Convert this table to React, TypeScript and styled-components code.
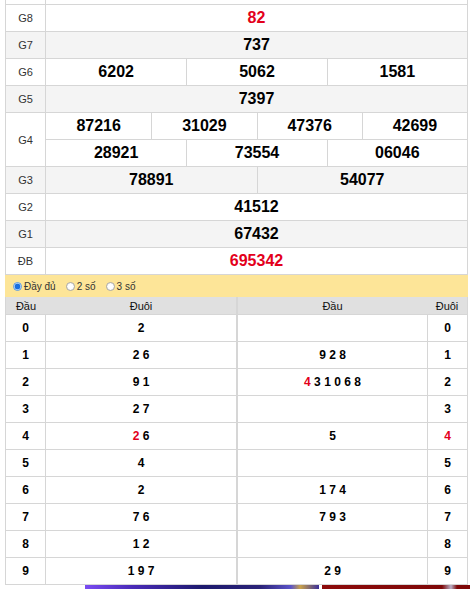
import React from 'react';
import styled, { createGlobalStyle } from 'styled-components';

const BORDER = '#d6d6d6';

const GlobalStyle = createGlobalStyle`
  html, body { margin: 0; padding: 0; overflow: hidden; background: #fff; }
  body { font-family: "Liberation Sans", Arial, sans-serif; }
`;

const Page = styled.div`
  width: 463px;
  margin-left: 5px;
`;

const Results = styled.div`
  border-left: 1px solid ${BORDER};
  border-right: 1px solid ${BORDER};
`;

const Row = styled.div<{ $h: number; $alt?: boolean }>`
  display: flex;
  height: ${p => p.$h}px;
  box-sizing: border-box;
  border-bottom: 1px solid ${BORDER};
  background: ${p => (p.$alt ? '#f4f4f4' : '#fff')};
`;

const Label = styled.div`
  width: 40px;
  flex: none;
  box-sizing: border-box;
  border-right: 1px solid ${BORDER};
  display: flex;
  align-items: center;
  justify-content: center;
  font-size: 11px;
  color: #333;
`;

const Values = styled.div`
  flex: 1;
  min-width: 0;
  display: flex;
  flex-direction: column;
`;

const Line = styled.div<{ $n: number }>`
  flex: 1;
  display: grid;
  grid-template-columns: repeat(${p => p.$n}, 1fr);
  & + & {
    border-top: 1px solid ${BORDER};
  }
`;

const Prize = styled.div<{ $red?: boolean }>`
  display: flex;
  align-items: center;
  justify-content: center;
  font-size: 16px;
  font-weight: bold;
  color: ${p => (p.$red ? '#e3001b' : '#000')};
  & + & {
    border-left: 1px solid ${BORDER};
  }
`;

const Options = styled.div`
  height: 22px;
  background: #fde598;
  display: flex;
  align-items: center;
  padding-left: 8px;
  gap: 10px;
  font-size: 10px;
  color: #333;
`;

const Option = styled.label`
  display: inline-flex;
  align-items: center;
  gap: 2px;
`;

const Radio = styled.input.attrs({ type: 'radio' })`
  appearance: none;
  -webkit-appearance: none;
  margin: 0;
  width: 9px;
  height: 9px;
  box-sizing: border-box;
  border-radius: 50%;
  border: 1px solid #a9a9a9;
  background: radial-gradient(circle, #ffffff 0 40%, #ececec 100%);
  &:checked {
    border-color: #5b9be6;
    background: radial-gradient(circle, #1a6fe0 0 2.6px, #cfe3fb 3.2px);
  }
`;

const LotoWrap = styled.div`
  display: flex;
`;

const LotoTable = styled.div<{ $w: number }>`
  width: ${p => p.$w}px;
  box-sizing: border-box;
  border-left: 1px solid ${BORDER};
  border-right: 1px solid ${BORDER};
`;

const LotoHead = styled.div<{ $cols: string }>`
  display: grid;
  grid-template-columns: ${p => p.$cols};
  height: 18px;
  box-sizing: border-box;
  background: #e0e0e0;
  border-bottom: 1px solid ${BORDER};
  align-items: center;
  text-align: center;
  font-size: 11px;
  color: #111;
`;

const LotoRow = styled.div<{ $cols: string }>`
  display: grid;
  grid-template-columns: ${p => p.$cols};
  height: 27px;
  box-sizing: border-box;
  border-bottom: 1px solid ${BORDER};
`;

const LotoCell = styled.div<{ $divider?: 'left' | 'right' }>`
  display: flex;
  align-items: center;
  justify-content: center;
  font-size: 12px;
  font-weight: bold;
  color: #000;
  ${p => (p.$divider === 'left' ? `border-left: 1px solid ${BORDER};` : '')}
  ${p => (p.$divider === 'right' ? `border-right: 1px solid ${BORDER};` : '')}
`;

const DigitList = styled.span`
  white-space: pre;
`;

const Digit = styled.span<{ $red?: boolean }>`
  color: ${p => (p.$red ? '#e3001b' : 'inherit')};
`;

const AdStrip = styled.div`
  display: flex;
  gap: 3px;
  margin-left: 80px;
`;

const Banner = styled.div<{ $w: number; $kind: 'purple' | 'red' }>`
  width: ${p => p.$w}px;
  height: 4px;
  flex: none;
  background: ${p =>
    p.$kind === 'purple'
      ? 'linear-gradient(90deg, #7a4cf2 0%, #4a2bb8 20%, #1d1a6e 50%, #2b2378 75%, #5b54c8 88%, #c9a24a 92%, #3a2f9a 100%)'
      : 'linear-gradient(90deg, #8c0b0b 0%, #7e0808 80%, #b9b1c9 86%, #7e0808 90%)'};
`;

type PrizeRow = { label: string; lines: string[][]; red?: boolean };

const prizes: PrizeRow[] = [
  { label: 'G8', lines: [['82']], red: true },
  { label: 'G7', lines: [['737']] },
  { label: 'G6', lines: [['6202', '5062', '1581']] },
  { label: 'G5', lines: [['7397']] },
  { label: 'G4', lines: [['87216', '31029', '47376', '42699'], ['28921', '73554', '06046']] },
  { label: 'G3', lines: [['78891', '54077']] },
  { label: 'G2', lines: [['41512']] },
  { label: 'G1', lines: [['67432']] },
  { label: 'ĐB', lines: [['695342']], red: true },
];

type D = { v: string; red?: boolean };

const leftLoto: D[][] = [
  [{ v: '2' }],
  [{ v: '2' }, { v: '6' }],
  [{ v: '9' }, { v: '1' }],
  [{ v: '2' }, { v: '7' }],
  [{ v: '2', red: true }, { v: '6' }],
  [{ v: '4' }],
  [{ v: '2' }],
  [{ v: '7' }, { v: '6' }],
  [{ v: '1' }, { v: '2' }],
  [{ v: '1' }, { v: '9' }, { v: '7' }],
];

const rightLoto: D[][] = [
  [],
  [{ v: '9' }, { v: '2' }, { v: '8' }],
  [{ v: '4', red: true }, { v: '3' }, { v: '1' }, { v: '0' }, { v: '6' }, { v: '8' }],
  [],
  [{ v: '5' }],
  [],
  [{ v: '1' }, { v: '7' }, { v: '4' }],
  [{ v: '7' }, { v: '9' }, { v: '3' }],
  [],
  [{ v: '2' }, { v: '9' }],
];

const Digits = ({ list }: { list: D[] }) => (
  <DigitList>
    {list.map((d, i) => (
      <React.Fragment key={i}>
        {i > 0 ? ' ' : ''}
        <Digit $red={d.red}>{d.v}</Digit>
      </React.Fragment>
    ))}
  </DigitList>
);

export default function App() {
  return (
    <>
      <GlobalStyle />
      <Page>
        <Results>
          <Row $h={5}>
            <Label />
            <Values />
          </Row>
          {prizes.map((p, i) => (
            <Row key={p.label} $h={27 * p.lines.length} $alt={i % 2 === 1}>
              <Label>{p.label}</Label>
              <Values>
                {p.lines.map((line, li) => (
                  <Line key={li} $n={line.length}>
                    {line.map(n => (
                      <Prize key={n} $red={p.red}>
                        {n}
                      </Prize>
                    ))}
                  </Line>
                ))}
              </Values>
            </Row>
          ))}
        </Results>
        <Options>
          <Option>
            <Radio name="mode" defaultChecked />
            Đầy đủ
          </Option>
          <Option>
            <Radio name="mode" />2 số
          </Option>
          <Option>
            <Radio name="mode" />3 số
          </Option>
        </Options>
        <LotoWrap>
          <LotoTable $w={232}>
            <LotoHead $cols="40px 1fr">
              <span>Đầu</span>
              <span>Đuôi</span>
            </LotoHead>
            {leftLoto.map((list, i) => (
              <LotoRow key={i} $cols="40px 1fr">
                <LotoCell $divider="right">{i}</LotoCell>
                <LotoCell>
                  <Digits list={list} />
                </LotoCell>
              </LotoRow>
            ))}
          </LotoTable>
          <LotoTable $w={231}>
            <LotoHead $cols="1fr 40px">
              <span>Đầu</span>
              <span>Đuôi</span>
            </LotoHead>
            {rightLoto.map((list, i) => (
              <LotoRow key={i} $cols="1fr 40px">
                <LotoCell>
                  <Digits list={list} />
                </LotoCell>
                <LotoCell $divider="left">
                  <Digit $red={i === 4}>{i}</Digit>
                </LotoCell>
              </LotoRow>
            ))}
          </LotoTable>
        </LotoWrap>
        <AdStrip>
          <Banner $w={234} $kind="purple" />
          <Banner $w={150} $kind="red" />
        </AdStrip>
      </Page>
    </>
  );
}
